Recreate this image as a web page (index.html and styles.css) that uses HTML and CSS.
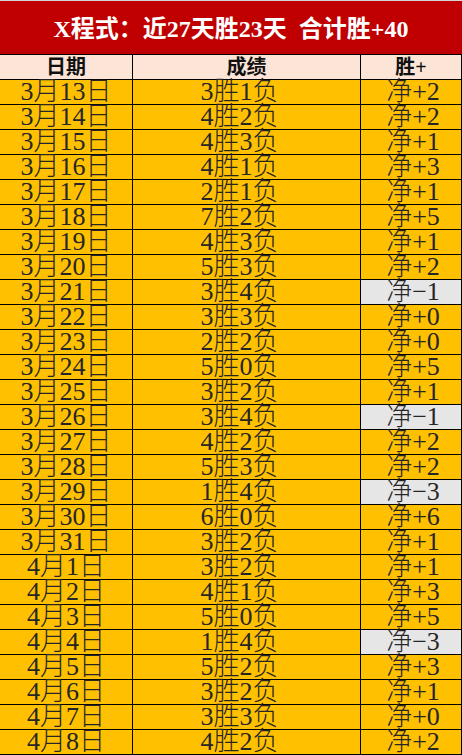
FILE: index.html
```html
<!DOCTYPE html>
<html lang="zh-CN">
<head>
<meta charset="utf-8">
<title>X程式</title>
<link rel="stylesheet" href="styles.css">
</head>
<body>
<div class="page">
  <div class="title">X程式：近27天胜23天  合计胜+40</div>
  <div class="sheet">
    <div class="cell head">日期</div>
    <div class="cell head">成绩</div>
    <div class="cell head last">胜+</div>

    <div class="cell date">3月13日</div><div class="cell score">3胜1负</div><div class="cell net">净+2</div>
    <div class="cell date">3月14日</div><div class="cell score">4胜2负</div><div class="cell net">净+2</div>
    <div class="cell date">3月15日</div><div class="cell score">4胜3负</div><div class="cell net">净+1</div>
    <div class="cell date">3月16日</div><div class="cell score">4胜1负</div><div class="cell net">净+3</div>
    <div class="cell date">3月17日</div><div class="cell score">2胜1负</div><div class="cell net">净+1</div>
    <div class="cell date">3月18日</div><div class="cell score">7胜2负</div><div class="cell net">净+5</div>
    <div class="cell date">3月19日</div><div class="cell score">4胜3负</div><div class="cell net">净+1</div>
    <div class="cell date">3月20日</div><div class="cell score">5胜3负</div><div class="cell net">净+2</div>
    <div class="cell date">3月21日</div><div class="cell score">3胜4负</div><div class="cell net neg">净−1</div>
    <div class="cell date">3月22日</div><div class="cell score">3胜3负</div><div class="cell net">净+0</div>
    <div class="cell date">3月23日</div><div class="cell score">2胜2负</div><div class="cell net">净+0</div>
    <div class="cell date">3月24日</div><div class="cell score">5胜0负</div><div class="cell net">净+5</div>
    <div class="cell date">3月25日</div><div class="cell score">3胜2负</div><div class="cell net">净+1</div>
    <div class="cell date">3月26日</div><div class="cell score">3胜4负</div><div class="cell net neg">净−1</div>
    <div class="cell date">3月27日</div><div class="cell score">4胜2负</div><div class="cell net">净+2</div>
    <div class="cell date">3月28日</div><div class="cell score">5胜3负</div><div class="cell net">净+2</div>
    <div class="cell date">3月29日</div><div class="cell score">1胜4负</div><div class="cell net neg">净−3</div>
    <div class="cell date">3月30日</div><div class="cell score">6胜0负</div><div class="cell net">净+6</div>
    <div class="cell date">3月31日</div><div class="cell score">3胜2负</div><div class="cell net">净+1</div>
    <div class="cell date">4月1日</div><div class="cell score">3胜2负</div><div class="cell net">净+1</div>
    <div class="cell date">4月2日</div><div class="cell score">4胜1负</div><div class="cell net">净+3</div>
    <div class="cell date">4月3日</div><div class="cell score">5胜0负</div><div class="cell net">净+5</div>
    <div class="cell date">4月4日</div><div class="cell score">1胜4负</div><div class="cell net neg">净−3</div>
    <div class="cell date">4月5日</div><div class="cell score">5胜2负</div><div class="cell net">净+3</div>
    <div class="cell date">4月6日</div><div class="cell score">3胜2负</div><div class="cell net">净+1</div>
    <div class="cell date">4月7日</div><div class="cell score">3胜3负</div><div class="cell net">净+0</div>
    <div class="cell date">4月8日</div><div class="cell score">4胜2负</div><div class="cell net">净+2</div>
  </div>
</div>
</body>
</html>
```
FILE: styles.css
```css
* { box-sizing: border-box; }

html, body {
  margin: 0;
  padding: 0;
  background: #ffffff;
}

.page {
  width: 462px;
  border-top: 1px solid #d4d4d4;
}

.title {
  height: 54px;
  background: #c00000;
  border-bottom: 1px solid #000;
  color: #ffffff;
  font-family: "Liberation Serif", "Noto Sans CJK SC", serif;
  font-weight: 700;
  font-size: 24px;
  line-height: 53px;
  padding-top: 2px;
  text-align: center;
  white-space: pre;
}

.sheet {
  display: grid;
  grid-template-columns: 133px 228px 101px;
  grid-auto-rows: 25px;
}

.cell {
  height: 25px;
  border-bottom: 1px solid #000;
  border-right: 1px solid #000;
  background: #ffc000;
  text-align: center;
  white-space: nowrap;
  overflow: visible;
  font-family: "Liberation Serif", "Noto Sans CJK SC", serif;
  font-size: 26px;
  font-weight: 300;
  line-height: 24px;
  color: #262626;
}

.score { padding-right: 14px; }

.net { padding-left: 4px; }

.neg { background: #e7e6e6; }

.head {
  background: #fce4d6;
  font-size: 20px;
  font-weight: 700;
  line-height: 24px;
  color: #111;
}
```
